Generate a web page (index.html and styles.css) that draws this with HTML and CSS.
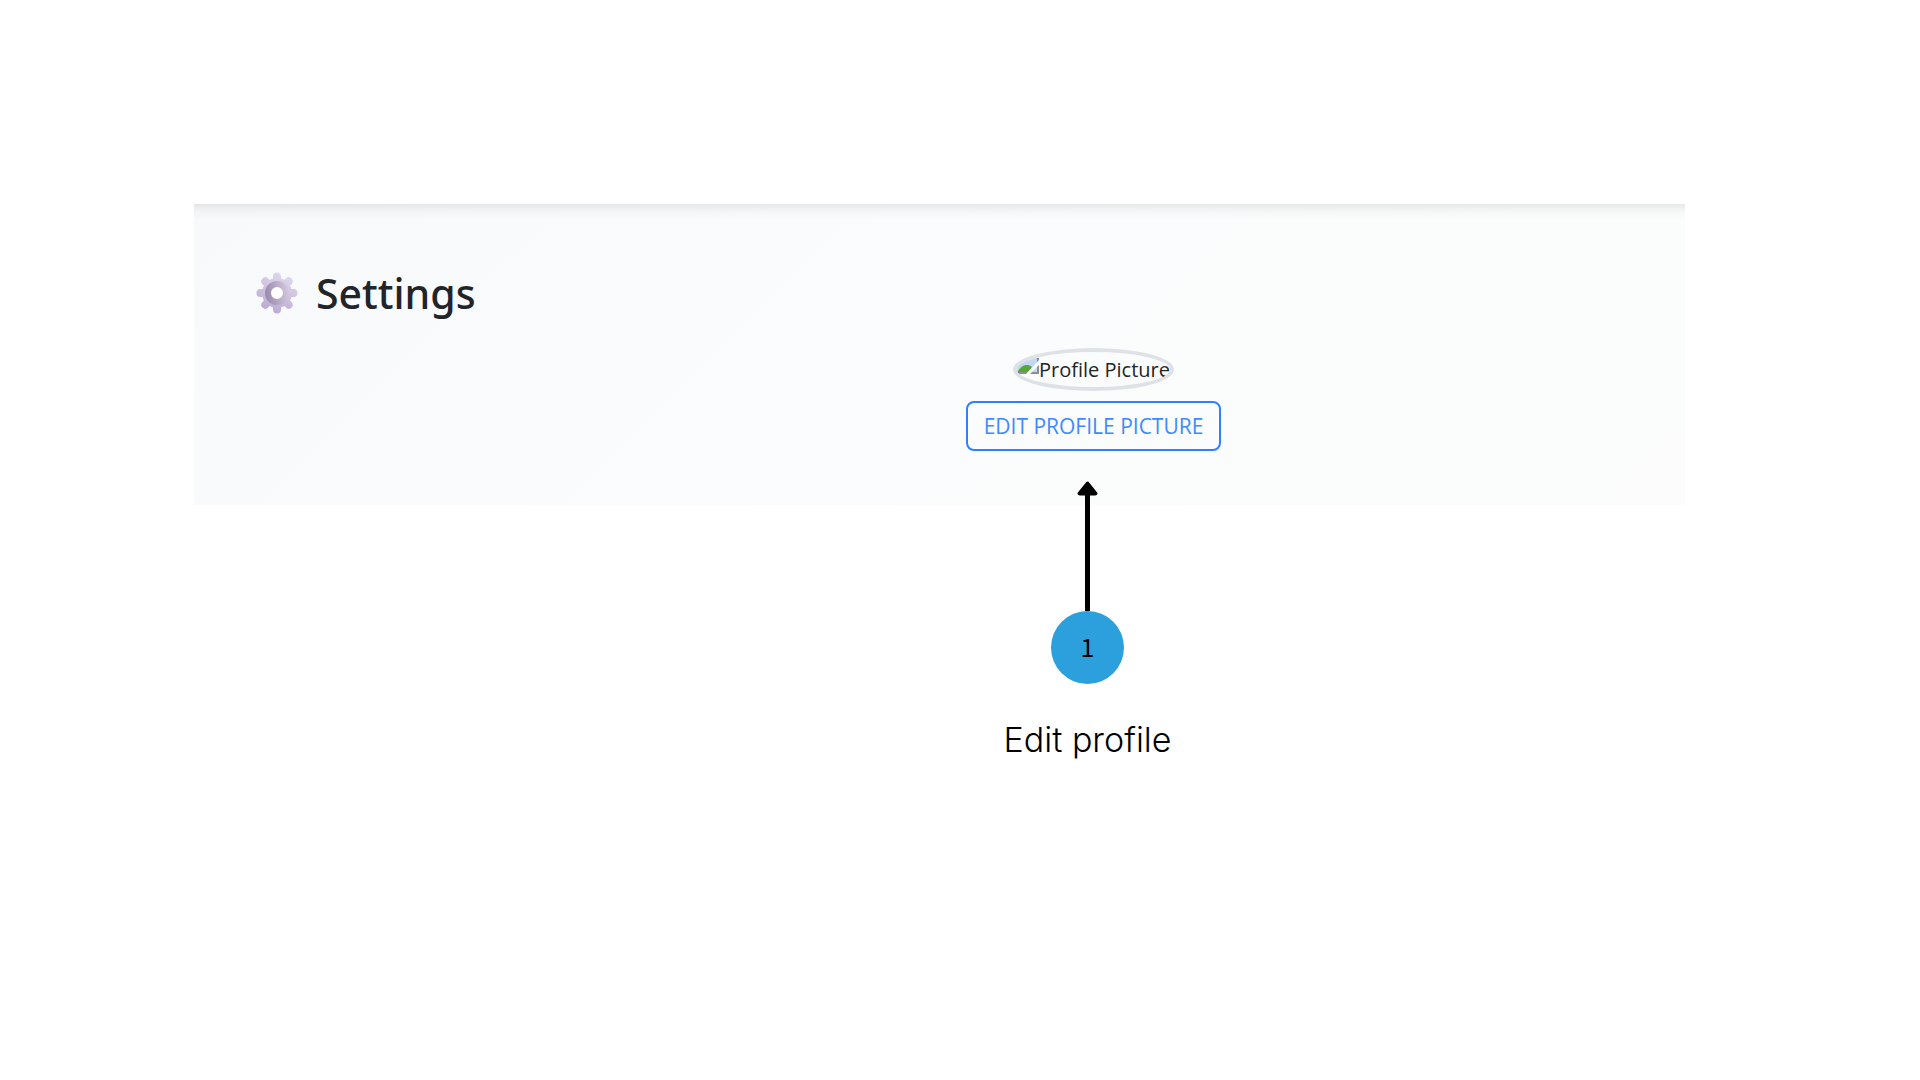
FILE: index.html
```html
<!DOCTYPE html>
<html lang="en">
<head>
<meta charset="utf-8">
<meta name="viewport" content="width=device-width, initial-scale=1">
<title>Settings</title>
<link rel="stylesheet" href="styles.css">
</head>
<body>
<main class="page">
  <section class="panel">
    <h1 class="title">
      <svg class="gear" viewBox="0 0 42 42" aria-hidden="true">
        <defs>
          <linearGradient id="teeth" x1="30" y1="2" x2="14" y2="40" gradientUnits="userSpaceOnUse">
            <stop offset="0" stop-color="#e0d8ec"/>
            <stop offset="1" stop-color="#bba9d3"/>
          </linearGradient>
          <linearGradient id="ring" x1="10" y1="22" x2="33" y2="18" gradientUnits="userSpaceOnUse">
            <stop offset="0" stop-color="#9b8bad"/>
            <stop offset="1" stop-color="#d3c9df"/>
          </linearGradient>
        </defs>
        <g stroke="url(#teeth)" stroke-width="8" stroke-linecap="round">
          <path d="M21 4.500L21.010 37.500M4.500 21L37.500 21.010M9.300 9.300L32.700 32.710M32.700 9.300L9.300 32.710"/>
        </g>
        <circle cx="21" cy="21" r="15" fill="url(#teeth)"/>
        <circle cx="21" cy="21" r="9" fill="#fff" stroke="url(#ring)" stroke-width="6"/>
      </svg>
      Settings
    </h1>
    <div class="profile">
      <div class="avatar">
        <svg class="broken" viewBox="0 0 22 16" aria-hidden="true">
          <path d="M0 0H21V16H0Z" fill="#c3d7f5"/>
          <path d="M0 15C4 7 10 5 15 9L11 15Z" fill="#56a832"/>
          <path d="M0 15H21V0" fill="none" stroke="#8b8f94" stroke-width="2"/>
          <path d="M22 2V7L13 16H9Z" fill="#fbfcfd"/>
        </svg>
        <span>Profile Picture</span>
      </div>
      <button class="edit" type="button">EDIT PROFILE PICTURE</button>
    </div>
  </section>
  <div class="callout">
    <svg class="arrow" viewBox="0 0 21 130" aria-hidden="true">
      <path d="M10.500 2L19 12.500Q19 13 18 13H3Q2 13 2 12.500Z" stroke="#000" stroke-width="3" stroke-linejoin="round"/>
      <path d="M8 12H13V130H8Z"/>
    </svg>
    <span class="step">1</span>
    <p class="caption">Edit profile</p>
  </div>
</main>
</body>
</html>
```
FILE: styles.css
```css
* { box-sizing: border-box; }

body {
  margin: 0;
  background: #fff;
  color: #212529;
  font-family: "Open Sans", "Noto Sans", sans-serif;
}

.page { padding: 204px 235px 0 194px; }

.panel {
  padding: 60px 0 54px 62px;
  background:
    linear-gradient(rgba(0, 0, 0, .08), rgba(0, 0, 0, .02) 8px, transparent 16px),
    linear-gradient(135deg, #f8f9fb, #fafcfd 50%, #fcfcfc);
}

.title {
  display: flex;
  align-items: center;
  gap: 18px;
  height: 58px;
  margin: 0;
  font-family: "Noto Sans", sans-serif;
  font-size: 41px;
  font-weight: 500;
  line-height: 56px;
}

.gear { width: 42px; height: 42px; }

.profile {
  display: flex;
  flex-direction: column;
  align-items: center;
  gap: 10px;
  padding-left: 246px;
  margin-top: 26px;
}

.avatar {
  display: flex;
  align-items: center;
  height: 43px;
  border: 4px solid #dee2e6;
  border-radius: 50%;
  overflow: hidden;
  font-size: 20px;
  line-height: 32px;
}

.broken { width: 22px; height: 16px; margin-bottom: 8px; }

.edit {
  height: 50px;
  padding: 0 16px;
  border: 2px solid #2f80fb;
  border-radius: 8px;
  background: transparent;
  color: #3d8bfd;
  font: 400 21px/46px "Open Sans", "Noto Sans", sans-serif;
}

.callout {
  display: flex;
  flex-direction: column;
  align-items: center;
  margin-top: -24px;
  padding-left: 296px;
  color: #000;
}

.arrow { width: 21px; height: 130px; }

.step {
  width: 73px;
  height: 73px;
  border-radius: 50%;
  background: #2ba0dc;
  font-family: "Noto Sans CJK JP", sans-serif;
  font-size: 25px;
  line-height: 70px;
  text-align: center;
}

.caption {
  margin: 32px 0 0;
  font-family: Inter, sans-serif;
  font-size: 34px;
  font-weight: 300;
  line-height: 48px;
}
```
